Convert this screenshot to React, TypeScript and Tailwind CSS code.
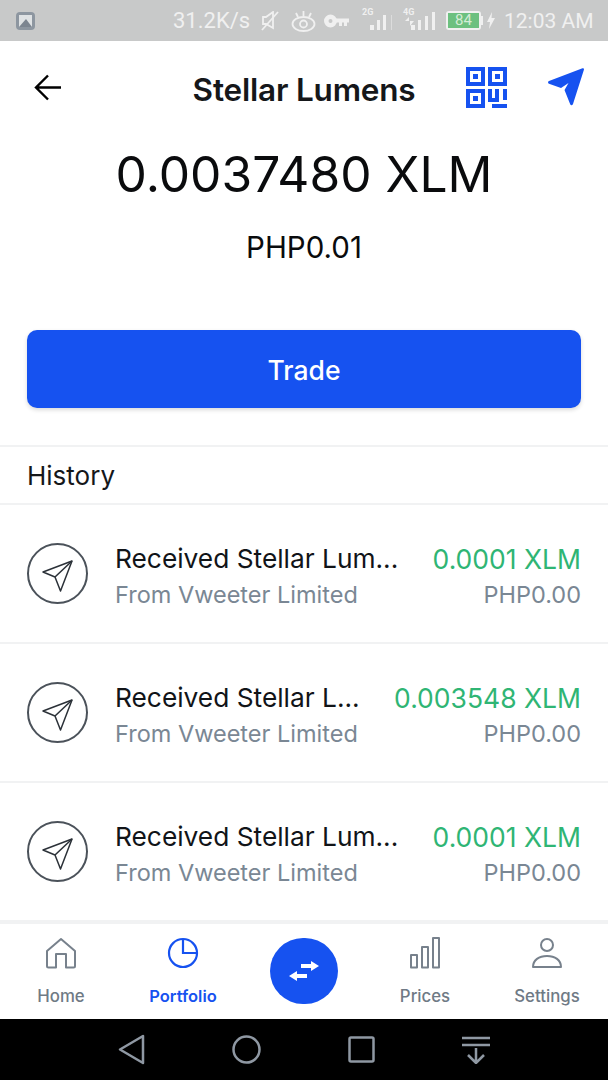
import React from 'react';

const font = { fontFamily: 'Inter, "Noto Sans", sans-serif' };

const rows = [
  { title: 'Received Stellar Lum...', amount: '0.0001 XLM' },
  { title: 'Received Stellar L...', amount: '0.003548 XLM' },
  { title: 'Received Stellar Lum...', amount: '0.0001 XLM' },
];

const PlaneOutline = () => (
  <svg className="translate-y-[2px]" width="32" height="32" viewBox="0 0 32 32" fill="none" stroke="#2b3138" strokeWidth="1.500" strokeLinejoin="round">
    <path d="M1 12 30 1 18.500 31 13 17Z" />
    <path d="M30 1 13 17" />
  </svg>
);

const StatusBar = () => (
  <div className="h-[41px] bg-[#c8c9c9] flex items-center pl-[15px] pr-[11px] text-[#f0f0f0] shrink-0" style={{ fontFamily: 'Roboto, sans-serif' }}>
    <svg width="21" height="20" viewBox="0 0 21 20">
      <rect x="1" y="1" width="19" height="18" rx="4" fill="#8d96a0" />
      <rect x="4" y="4" width="13" height="12" fill="#dfe2e4" />
      <path d="M4 16 11 8l6 8Z" fill="#7c8590" />
    </svg>
    <div className="ml-auto flex items-center h-[24px]">
      <span className="text-[22px] leading-[24px] w-[77px] whitespace-nowrap">31.2K/s</span>
      <svg className="ml-[10px]" width="20" height="20" viewBox="0 0 20 20" fill="none" stroke="#f0f0f0" strokeWidth="1.800">
        <path d="M3 6h3l7-5v16l-7-4H3Z" />
        <path d="M2 19 18 1" />
      </svg>
      <svg className="ml-[11px]" width="25" height="22" viewBox="0 0 25 22" fill="none" stroke="#f0f0f0" strokeWidth="1.800">
        <ellipse cx="12.500" cy="14" rx="11" ry="7" />
        <circle cx="12.500" cy="14" r="3.500" />
        <path d="M5 3l2 4M12.500 1v5M20 3l-2 4" />
      </svg>
      <svg className="ml-[8px]" width="25" height="14" viewBox="0 0 25 14" fill="#f0f0f0">
        <path fillRule="evenodd" d="M6.500 0.500a6.500 6.500 0 1 1 0 13 6.500 6.500 0 0 1 0-13Zm0 4.500a2 2 0 1 0 0 4 2 2 0 0 0 0-4Z" />
        <path d="M12 4.500h13v4h-2v3.500h-3V8.500h-2V12h-3V8.500h-3Z" />
      </svg>
      <div className="ml-[13px] relative w-[31px] h-[24px]">
        <span className="absolute left-0 top-[-3px] text-[9px] font-bold leading-[12px]">2G</span>
        <svg className="absolute left-0 top-[3px]" width="31" height="20" viewBox="0 0 31 20" fill="#f0f0f0">
          <rect x="8" y="13" width="4" height="5" />
          <rect x="15" y="8" width="3" height="10" />
          <rect x="21" y="3" width="3" height="15" />
          <rect x="29" y="3" width="1" height="15" opacity="0.5" />
        </svg>
      </div>
      <div className="ml-[10px] relative w-[32px] h-[24px]">
        <span className="absolute left-0 top-[-3px] text-[9px] font-bold leading-[12px]">4G</span>
        <svg className="absolute left-0 top-[3px]" width="32" height="20" viewBox="0 0 32 20" fill="#f0f0f0">
          <path d="M6 5 2 9h4ZM7 9v5l4-5Z" />
          <rect x="8" y="13" width="4" height="5" />
          <rect x="15" y="8" width="3" height="10" />
          <rect x="22" y="4" width="3" height="14" />
          <rect x="29" y="0" width="3" height="18" />
        </svg>
      </div>
      <div className="ml-[11px] w-[35px] h-[19px] rounded-[3px] border-2 border-[#f0f0f0] flex">
        <div className="flex-1 bg-[#6cc07f] text-[15px] leading-[15px] text-center text-[#d4ecd6]">84</div>
      </div>
      <div className="w-[2px] h-[9px] bg-[#f0f0f0]" />
      <svg className="ml-[4px]" width="8" height="17" viewBox="0 0 8 17" fill="#f0f0f0">
        <path d="M5 0 0 10h3l-1 7 6-11H4.500Z" />
      </svg>
      <span className="ml-[9px] text-[21px] leading-[24px] w-[93px] whitespace-nowrap">12:03 AM</span>
    </div>
  </div>
);

const Header = () => (
  <div className="relative h-[54px] flex items-center justify-center mt-[22px] shrink-0">
    <span className="text-[31.500px] font-semibold text-[#15171a] tracking-[-0.2px]">Stellar Lumens</span>
    <svg className="absolute left-[34px] top-[11px]" width="27" height="27" viewBox="0 0 27 27" fill="none" stroke="#000" strokeWidth="2.400">
      <path d="M27 13.500H2M14 1.500 2 13.500l12 12" />
    </svg>
    <svg className="absolute left-[466px] top-[4px]" width="41" height="41" viewBox="0 0 41 41" fill="#1652f0">
      <path fillRule="evenodd" d="M0 0h19v19H0ZM4 4v11h11V4ZM22 0h19v19H22ZM26 4v11h11V4ZM0 22h19v19H0ZM4 26v11h11V26Z" />
      <rect x="7" y="7" width="5" height="5" />
      <rect x="29" y="7" width="5" height="5" />
      <rect x="7" y="29" width="5" height="5" />
      <path d="M22 22h4v9h3v-9h4v13H22ZM37 22h4v11h-4ZM26 37h15v4H26Z" />
    </svg>
    <svg className="absolute left-[547px] top-[5px]" width="39" height="39" viewBox="0 0 39 39" fill="#1652f0">
      <path d="M37 1.500 26 36a1.500 1.500 0 0 1-2.800.3L17.500 22l4-7-7.500 5L2 15.800a1.500 1.500 0 0 1 0-2.800L35.500.3A1.200 1.200 0 0 1 37 1.500Z" />
    </svg>
  </div>
);

const Row = ({ title, amount }: { title: string; amount: string }) => (
  <div className="h-[139px] border-b-2 border-[#f1f2f3] px-[27px] flex items-center shrink-0">
    <div className="w-[61px] h-[61px] rounded-full border-2 border-[#4b525a] flex items-center justify-center shrink-0">
      <PlaneOutline />
    </div>
    <div className="ml-[27px] flex-1 min-w-0 pt-[7px]">
      <div className="text-[26.300px] leading-[36px] text-[#111418] whitespace-nowrap">{title}</div>
      <div className="text-[23.500px] leading-[36px] text-[#7a8794] whitespace-nowrap">From Vweeter Limited</div>
    </div>
    <div className="text-right shrink-0 pt-[7px]">
      <div className="text-[26.500px] leading-[36px] text-[#2fb574]">{amount}</div>
      <div className="text-[23.500px] leading-[36px] text-[#7a8794]">PHP0.00</div>
    </div>
  </div>
);

const NavItem = ({ label, active, children }: { label: string; active?: boolean; children: React.ReactNode }) => (
  <div className="flex-1 flex flex-col items-center">
    <div className="h-[34px] flex items-end">{children}</div>
    <span className={`mt-[15px] leading-[24px] ${active ? 'text-[16.500px] text-[#1652f0] font-semibold' : 'text-[16.800px] text-[#6f7a85] font-medium'}`}>{label}</span>
  </div>
);

const BottomNav = () => (
  <div className="h-[95px] bg-white flex pt-[11px] shrink-0">
    <div className="w-[122px] flex">
      <NavItem label="Home">
        <svg width="32" height="32" viewBox="0 0 32 32" fill="none" stroke="#77818c" strokeWidth="2" strokeLinejoin="round">
          <path d="M2 14 16 2l14 12v15a1.500 1.500 0 0 1-1.500 1.500H21V17H11v13.500H3.500A1.500 1.500 0 0 1 2 29Z" />
        </svg>
      </NavItem>
    </div>
    <div className="w-[122px] flex">
      <NavItem label="Portfolio" active>
        <svg width="32" height="32" viewBox="0 0 32 32" fill="none" stroke="#1652f0" strokeWidth="2.200">
          <circle cx="16" cy="16" r="14" />
          <path d="M16 2v14h14" />
        </svg>
      </NavItem>
    </div>
    <div className="w-[120px] flex justify-center">
      <div className="w-[68px] h-[66px] mt-[3px] rounded-full bg-[#1652f0] flex items-center justify-center">
        <svg width="30" height="20" viewBox="0 0 30 20" fill="#fff">
          <path d="M12 3h10V0l8 5-8 5V7H12Z" />
          <path d="M18 13H8v-3l-8 5 8 5v-3h10Z" />
        </svg>
      </div>
    </div>
    <div className="w-[122px] flex">
      <NavItem label="Prices">
        <svg width="32" height="32" viewBox="0 0 32 32" fill="none" stroke="#77818c" strokeWidth="2" strokeLinejoin="round">
          <rect x="2" y="18" width="6" height="12.500" />
          <rect x="13" y="10" width="6" height="20.500" />
          <rect x="24" y="1" width="6" height="29.500" />
        </svg>
      </NavItem>
    </div>
    <div className="w-[122px] flex">
      <NavItem label="Settings">
        <svg width="32" height="32" viewBox="0 0 32 32" fill="none" stroke="#77818c" strokeWidth="2" strokeLinejoin="round">
          <circle cx="16" cy="8" r="6" />
          <path d="M2 30c0-7 6-11 14-11s14 4 14 11Z" />
        </svg>
      </NavItem>
    </div>
  </div>
);

const SystemNav = () => (
  <div className="h-[61px] bg-black flex items-center justify-center shrink-0">
    <div className="flex items-center gap-[87px]">
      <svg width="27" height="31" viewBox="0 0 27 31" fill="none" stroke="#8f98a3" strokeWidth="2.500" strokeLinejoin="round">
        <path d="M25 2v27L2 15.500Z" />
      </svg>
      <svg width="29" height="29" viewBox="0 0 29 29" fill="none" stroke="#8f98a3" strokeWidth="2.500">
        <circle cx="14.500" cy="14.500" r="13" />
      </svg>
      <svg width="27" height="27" viewBox="0 0 27 27" fill="none" stroke="#8f98a3" strokeWidth="2.500">
        <rect x="1.500" y="1.500" width="24" height="24" rx="1.500" />
      </svg>
      <svg width="28" height="28" viewBox="0 0 28 28" fill="none" stroke="#8f98a3" strokeWidth="2.500">
        <path d="M0 2h28M0 9h28M14 12v15M6 19l8 8 8-8" />
      </svg>
    </div>
  </div>
);

export default function App() {
  return (
    <div className="w-[608px] h-[1080px] bg-white flex flex-col overflow-hidden" style={font}>
      <StatusBar />
      <Header />
      <div className="mt-[25px] text-center text-[49.700px] leading-[64px] text-[#0a0b0d] shrink-0">0.0037480 XLM</div>
      <div className="mt-[24px] text-center text-[29.500px] leading-[34px] text-[#0a0b0d] shrink-0">PHP0.01</div>
      <div className="mx-[27px] mt-[66px] h-[78px] pt-[3px] rounded-[10px] bg-[#1652f0] shadow-[0_2px_4px_rgba(0,0,0,0.15)] flex items-center justify-center text-white text-[26.500px] font-medium shrink-0">
        Trade
      </div>
      <div className="mt-[37px] border-t-2 border-b-2 border-[#f1f2f3] h-[60px] pl-[27px] flex items-center text-[26px] text-[#15171a] shrink-0">
        History
      </div>
      {rows.map((r, i) => (
        <Row key={i} title={r.title} amount={r.amount} />
      ))}
      <div className="h-[2px] bg-[#f1f2f3] shrink-0" />
      <BottomNav />
      <SystemNav />
    </div>
  );
}
